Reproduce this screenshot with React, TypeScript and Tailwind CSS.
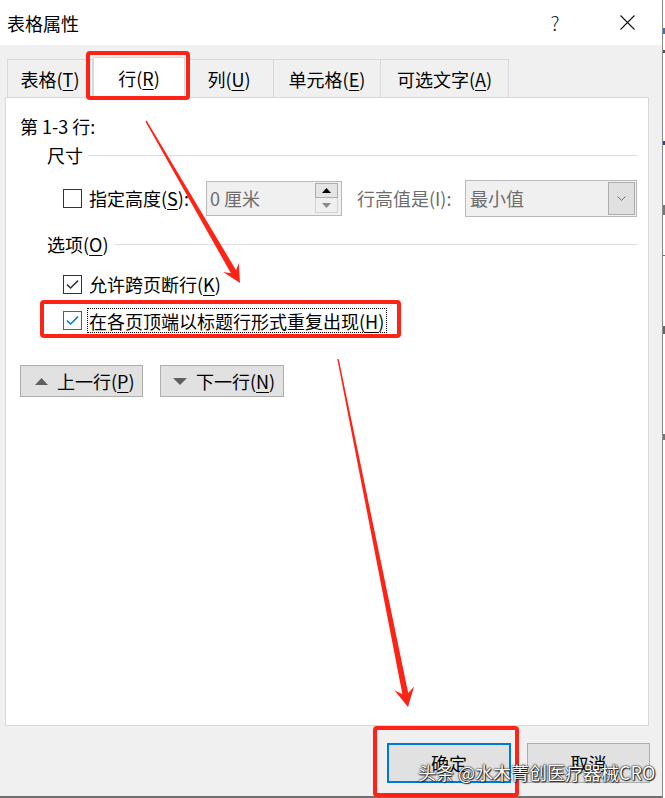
import React from 'react';

const RED = '#ff2216';

function arrowPoints(
  x1: number,
  y1: number,
  x2: number,
  y2: number,
  w0: number,
  w1: number,
  hl: number,
  hw: number
) {
  const dx = x2 - x1;
  const dy = y2 - y1;
  const len = Math.hypot(dx, dy);
  const ux = dx / len;
  const uy = dy / len;
  const nx = -uy;
  const ny = ux;
  const bx = x2 - ux * hl;
  const by = y2 - uy * hl;
  const kx = x2 - ux * hl * 0.72;
  const ky = y2 - uy * hl * 0.72;
  const pts = [
    [x1 + (nx * w0) / 2, y1 + (ny * w0) / 2],
    [kx + (nx * w1) / 2, ky + (ny * w1) / 2],
    [bx + nx * hw, by + ny * hw],
    [x2, y2],
    [bx - nx * hw, by - ny * hw],
    [kx - (nx * w1) / 2, ky - (ny * w1) / 2],
    [x1 - (nx * w0) / 2, y1 - (ny * w0) / 2],
  ];
  return pts.map((p) => p[0].toFixed(1) + ',' + p[1].toFixed(1)).join(' ');
}

function Key({ k }: { k: string }) {
  return <span className="underline underline-offset-[3px] decoration-1">{k}</span>;
}

function CheckBox({ checked, focus }: { checked?: boolean; focus?: boolean }) {
  const c = focus ? '#0078d7' : '#333333';
  return (
    <span
      className={`w-[19px] h-[19px] shrink-0 bg-white border flex items-center justify-center ${
        focus ? 'border-[#0078d7]' : 'border-[#333333]'
      }`}
    >
      {checked && (
        <svg width="17" height="17" viewBox="0 0 17 17">
          <path d="M3 8.6 L6.6 12 L14 4.6" fill="none" stroke={c} strokeWidth="1.5" />
        </svg>
      )}
    </span>
  );
}

function SectionHead({ children, lineGap }: { children: React.ReactNode; lineGap: string }) {
  return (
    <div className="flex items-center h-[24px] pl-[41px] pr-[11px]">
      <span className="leading-[24px]">{children}</span>
      <span className={`flex-1 h-px bg-[#dcdcdc] ${lineGap}`} />
    </div>
  );
}

export default function App() {
  const tabs = [
    { label: '表格', key: 'T', w: 'w-[86px]' },
    { label: '行', key: 'R', w: 'w-[92px]', active: true },
    { label: '列', key: 'U', w: 'w-[89px]' },
    { label: '单元格', key: 'E', w: 'w-[107px]' },
    { label: '可选文字', key: 'A', w: 'w-[128px]' },
  ];

  return (
    <div
      className="relative w-[665px] h-[798px] overflow-hidden flex text-[18px] text-black"
      style={{ fontFamily: '"Noto Sans CJK SC", "Noto Sans", sans-serif' }}
    >
      {/* dialog */}
      <div className="w-[662px] h-[798px] bg-[#f0f0f0] flex flex-col border-b-2 border-[#707070]">
        {/* title bar */}
        <div className="h-[45px] bg-white flex items-center shrink-0">
          <span className="pl-[7px] leading-[24px]">表格属性</span>
          <span className="flex-1" />
          <span className="w-[20px] text-center text-[20px] font-light text-[#222] leading-[24px]">?</span>
          <svg className="ml-[55px] mr-[27px]" width="15" height="15" viewBox="0 0 15 15">
            <path d="M0.5 0.5 L14.5 14.5 M14.5 0.5 L0.5 14.5" stroke="#111" strokeWidth="1.1" />
          </svg>
        </div>

        {/* tabs */}
        <div className="h-[52px] shrink-0 flex items-end pl-[7px]">
          {tabs.map((t, i) =>
            t.active ? (
              <div
                key={i}
                className={`${t.w} h-[41px] -mb-px relative z-10 bg-white border-t border-x border-[#d9d9d9] flex items-center justify-center leading-[24px]`}
              >
                {t.label}(<Key k={t.key} />)
              </div>
            ) : (
              <div
                key={i}
                className={`${t.w} h-[38px] border-t border-[#d9d9d9] ${
                  i === 0 ? 'border-l' : ''
                } border-r flex items-center justify-center leading-[24px]`}
              >
                {t.label}(<Key k={t.key} />)
              </div>
            )
          )}
        </div>

        {/* panel */}
        <div className="ml-[5px] w-[644px] h-[629px] shrink-0 bg-white border border-[#d9d9d9] flex flex-col">
          <div className="mt-[16px] pl-[14px] leading-[24px]">第 1-3 行:</div>

          <div className="mt-[5px]">
            <SectionHead lineGap="ml-[5px]">尺寸</SectionHead>
          </div>

          <div className="mt-[13px] h-[36px] pl-[57px] flex items-center">
            <div className="w-[143px] flex items-center">
              <CheckBox />
              <span className="ml-[7px] leading-[24px]">
                指定高度(<Key k="S" />):
              </span>
            </div>
            <div className="w-[136px] h-[35px] bg-[#f0f0f0] border border-[#b9b9b9] flex items-center justify-between pl-[3px] pr-[3px]">
              <span className="text-[#6d6d6d] leading-[24px]">0 厘米</span>
              <div className="flex flex-col w-[23px] h-[30px]">
                <div className="h-[15px] bg-[#e5e5e5] border border-[#adadad] flex items-center justify-center">
                  <svg width="9" height="5" viewBox="0 0 9 5">
                    <path d="M0 5 L4.5 0 L9 5 Z" fill="#000" />
                  </svg>
                </div>
                <div className="h-[15px] bg-[#efefef] border-x border-b border-[#d4d4d4] flex items-center justify-center">
                  <svg width="9" height="5" viewBox="0 0 9 5">
                    <path d="M0 0 L9 0 L4.5 5 Z" fill="#8a8a8a" />
                  </svg>
                </div>
              </div>
            </div>
            <div className="w-[123px] pl-[15px] text-[#6d6d6d] leading-[24px]">行高值是(I):</div>
            <div className="w-[172px] h-[37px] bg-[#f0f0f0] border border-[#b9b9b9] flex items-center pl-[4px] pr-px">
              <span className="flex-1 text-[#6d6d6d] leading-[24px]">最小值</span>
              <div className="w-[27px] h-[33px] bg-[#e0e0e0] border border-[#adadad] flex items-center justify-center">
                <svg width="9" height="5" viewBox="0 0 9 5">
                  <path d="M0.5 0.5 L4.5 4.3 L8.5 0.5" fill="none" stroke="#707070" strokeWidth="1" />
                </svg>
              </div>
            </div>
          </div>

          <div className="mt-[16px]">
            <SectionHead lineGap="ml-[6px]">
              选项(<Key k="O" />)
            </SectionHead>
          </div>

          <div className="mt-[16px] h-[24px] pl-[57px] flex items-center">
            <CheckBox checked />
            <span className="ml-[7px] leading-[24px]">
              允许跨页断行(<Key k="K" />)
            </span>
          </div>

          <div className="mt-[12px] h-[25px] pl-[57px] flex items-center">
            <CheckBox checked focus />
            <span className="ml-[5px] h-[25px] border border-dotted border-black pl-px pr-[2px] flex items-center leading-[24px]">
              在各页顶端以标题行形式重复出现(<Key k="H" />)
            </span>
          </div>

          <div className="mt-[32px] pl-[14px] flex gap-[17px]">
            <button className="w-[123px] h-[32px] bg-[#e1e1e1] border border-[#adadad] flex items-center pl-[14px]">
              <svg width="13" height="7" viewBox="0 0 13 7">
                <path d="M0 7 L6.5 0 L13 7 Z" fill="#606060" />
              </svg>
              <span className="ml-[9px] leading-[24px]">
                上一行(<Key k="P" />)
              </span>
            </button>
            <button className="w-[124px] h-[32px] bg-[#e1e1e1] border border-[#adadad] flex items-center pl-[12px]">
              <svg width="14" height="7" viewBox="0 0 14 7">
                <path d="M0 0 L14 0 L7 7 Z" fill="#606060" />
              </svg>
              <span className="ml-[9px] leading-[24px]">
                下一行(<Key k="N" />)
              </span>
            </button>
          </div>
        </div>

        {/* footer */}
        <div className="flex-1 flex justify-end items-start pt-[17px] pr-[12px] gap-[16px]">
          <button className="w-[124px] h-[40px] bg-[#e1e1e1] border-2 border-[#0078d7] flex items-center justify-center leading-[24px]">
            确定
          </button>
          <button className="w-[123px] h-[40px] bg-[#e1e1e1] border border-[#adadad] flex items-center justify-center leading-[24px]">
            取消
          </button>
        </div>
      </div>

      {/* background document strip */}
      <div className="flex-1 bg-white border-l border-[#8a8a8a] flex flex-col">
        <span className="mt-[28px] h-[6px] bg-[#4a6fa5]" />
        <span className="mt-[16px] h-[3px] bg-[#555]" />
        <span className="mt-[88px] h-[4px] bg-[#2b4a7a]" />
        <span className="mt-[60px] h-[10px] bg-[#777]" />
        <span className="mt-[40px] h-px bg-[#e04040]" />
        <span className="mt-[70px] h-[8px] bg-[#666]" />
        <span className="mt-[100px] h-[6px] bg-[#777]" />
      </div>

      {/* annotations */}
      <div className={`absolute left-[86px] top-[51px] w-[104px] h-[49px] border-4 border-[#ff2216] rounded-[4px] z-20`} />
      <div className="absolute left-[40px] top-[300px] w-[361px] h-[38px] border-4 border-[#ff2216] rounded-[4px] z-20" />
      <div className="absolute left-[373px] top-[726px] w-[146px] h-[71px] border-4 border-[#ff2216] rounded-[4px] z-20" />

      <svg className="absolute left-0 top-0 z-20 pointer-events-none" width="665" height="798" viewBox="0 0 665 798">
        <polygon points={arrowPoints(146, 121, 240, 283, 1.5, 6, 18, 9)} fill={RED} />
        <polygon points={arrowPoints(338, 359, 408, 707, 1.5, 6, 19, 10)} fill={RED} />
      </svg>

      <div className="absolute left-[418px] top-[760px] z-30 text-white leading-[24px] whitespace-nowrap [text-shadow:0_0_2px_#000,0_0_1px_#000,1px_1px_1px_#333]">
        头条 @水木菁创医疗器械CRO
      </div>
    </div>
  );
}
